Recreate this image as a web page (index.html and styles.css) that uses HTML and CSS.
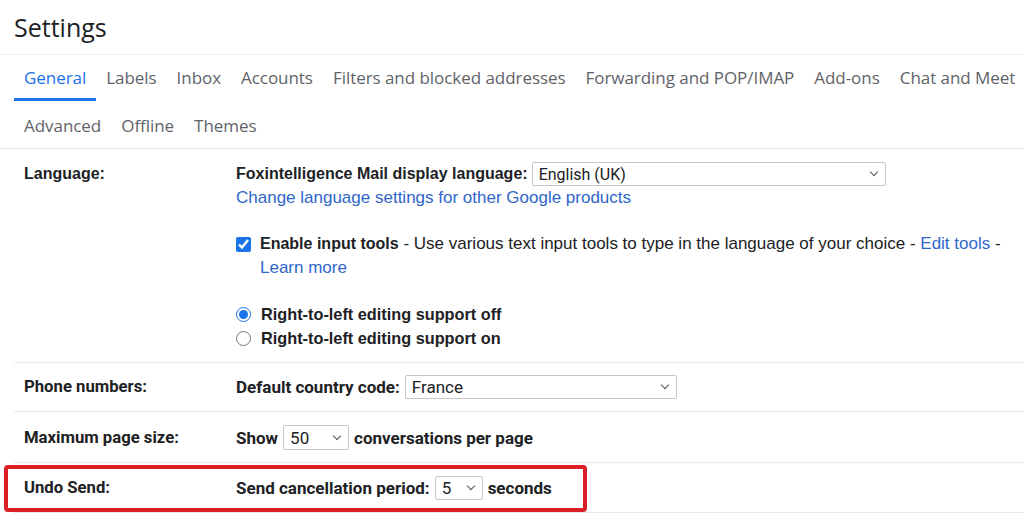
FILE: index.html
```html
<!DOCTYPE html>
<html lang="en">
<head>
<meta charset="utf-8">
<title>Settings</title>
<link rel="stylesheet" href="styles.css">
</head>
<body>
<div class="page">
  <header class="title">Settings</header>
  <nav class="tabs">
    <div class="tab-row">
      <span class="tab active">General</span>
      <span class="tab">Labels</span>
      <span class="tab">Inbox</span>
      <span class="tab">Accounts</span>
      <span class="tab">Filters and blocked addresses</span>
      <span class="tab">Forwarding and POP/IMAP</span>
      <span class="tab">Add-ons</span>
      <span class="tab">Chat and Meet</span>
    </div>
    <div class="tab-row second">
      <span class="tab">Advanced</span>
      <span class="tab">Offline</span>
      <span class="tab">Themes</span>
    </div>
  </nav>

  <section class="rows">
    <div class="row lang">
      <div class="label">Language:</div>
      <div class="value">
        <div class="line first">
          <b>Foxintelligence Mail display language:</b>
          <span class="select wide"><span>English (UK)</span><i class="chev"></i></span>
        </div>
        <div class="line"><a class="link">Change language settings for other Google products</a></div>
        <div class="check-block">
          <input type="checkbox" class="box" checked>
          <p class="check-text"><b>Enable input tools</b> - Use various text input tools to type in the language of your choice - <a class="link">Edit tools</a> - <a class="link">Learn more</a></p>
        </div>
        <div class="radios">
          <label class="radio"><input type="radio" name="rtl" checked><b>Right-to-left editing support off</b></label>
          <label class="radio"><input type="radio" name="rtl"><b>Right-to-left editing support on</b></label>
        </div>
      </div>
    </div>

    <div class="row alt phone">
      <div class="label">Phone numbers:</div>
      <div class="value inline">
        <b>Default country code:</b>
        <span class="select country"><span>France</span><i class="chev"></i></span>
      </div>
    </div>

    <div class="row alt pagesize">
      <div class="label">Maximum page size:</div>
      <div class="value inline">
        <b>Show</b>
        <span class="select size"><span>50</span><i class="chev"></i></span>
        <b>conversations per page</b>
      </div>
    </div>

    <div class="row alt undo">
      <div class="label">Undo Send:</div>
      <div class="value inline">
        <b>Send cancellation period:</b>
        <span class="select period"><span>5</span><i class="chev"></i></span>
        <b>seconds</b>
      </div>
    </div>
  </section>

  <div class="highlight"></div>
</div>
</body>
</html>
```

FILE: styles.css
```css
* { box-sizing: border-box; }
html, body { margin: 0; padding: 0; background: #fff; }
body { width: 1024px; height: 514px; overflow: hidden; color: #202124; font-family: "Liberation Sans", Arial, sans-serif; }

.page { position: relative; width: 1024px; height: 514px; }

.title {
  height: 55px;
  padding-left: 14px;
  line-height: 54px;
  font-family: "Open Sans", sans-serif;
  font-size: 25px;
  color: #202124;
  border-bottom: 1px solid #eceff1;
}

.tabs { border-bottom: 1px solid #e8eaed; }
.tab-row { display: flex; padding-left: 14px; height: 46px; white-space: nowrap; }
.tab-row.second { height: 47px; }
.tab {
  padding: 0 10px;
  line-height: 46px;
  font-family: "Open Sans", sans-serif;
  font-size: 17px;
  letter-spacing: -0.05px;
  color: #5f6368;
  border-bottom: 3px solid transparent;
}
.tab.active { color: #1a73e8; border-bottom-color: #1a73e8; height: 46px; }
.tab-row.second .tab { line-height: 49px; }

.rows { margin-left: 14px; }
.row {
  display: grid;
  grid-template-columns: 222px 1fr;
  border-bottom: 1px solid #e8eaed;
}
.label {
  padding-left: 10px;
  font-weight: bold;
  font-size: 16px;
}
b { font-weight: bold; font-size: 16px; }

.lang { padding: 13px 0 12px; }
.lang .label { line-height: 24px; }
.lang .value { font-size: 17px; }
.line { display: flex; align-items: center; height: 24px; white-space: nowrap; }
.line.first { gap: 4px; }
.link { color: #2f66c9; text-decoration: none; }

.check-block { display: flex; align-items: flex-start; margin-top: 22px; padding-right: 8px; }
.box {
  margin: 5px 9px 0 0;
  width: 15px; height: 15px;
  accent-color: #1a73e8;
  flex: none;
}
.check-text { margin: 0; line-height: 24px; }

.radios { margin-top: 22px; }
.radio { display: flex; align-items: center; height: 24px; }
.radio b { font-size: 16.3px; }
.radio input { margin: 0 10px 0 0; width: 15px; height: 15px; accent-color: #1a73e8; }

.alt { font-family: Roboto, "Liberation Sans", sans-serif; }
.phone { padding: 11px 0 12px; }
.pagesize { padding: 13px 0 12px; }
.undo { padding: 12px 0 12px; }
.alt .label { line-height: 25px; font-size: 16.7px; }
.inline { display: flex; align-items: center; gap: 5px; font-size: 17px; white-space: nowrap; }
.inline b { font-size: 17px; }

.select {
  display: inline-flex;
  align-items: center;
  justify-content: space-between;
  height: 24px;
  padding: 0 8px 0 6px;
  border: 1px solid #c4c7c5;
  border-radius: 2px;
  font-weight: normal;
  background: #fff;
}
.lang .select { font-family: Roboto, "Liberation Sans", sans-serif; font-size: 16px; }
.wide { width: 354px; }
.country { width: 272px; height: 24px; }
.size { width: 66px; height: 25px; }
.period { width: 48px; }
.chev {
  width: 6px; height: 6px;
  border-right: 1.2px solid #555;
  border-bottom: 1.2px solid #555;
  transform: rotate(45deg);
  margin-top: -4px;
}

.highlight {
  position: absolute;
  left: 4px; top: 465px;
  width: 583px; height: 47px;
  border: 4px solid #dc1f26;
  border-radius: 4px;
  pointer-events: none;
}
```
